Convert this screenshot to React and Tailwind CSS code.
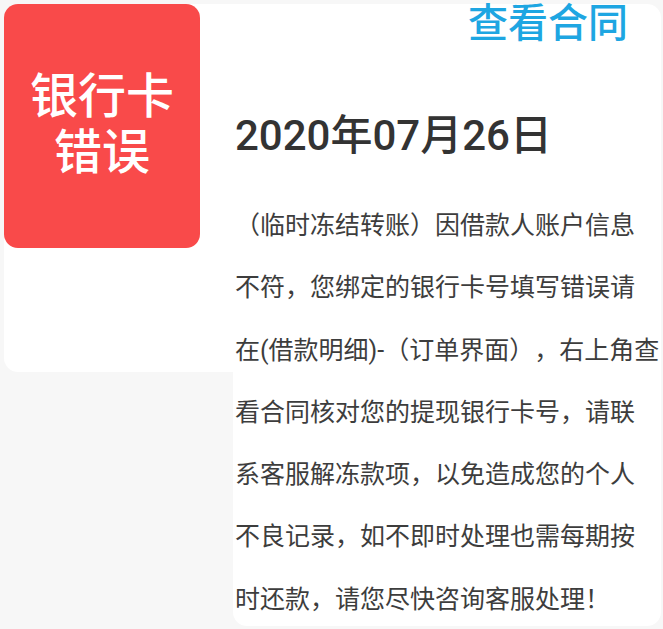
const LINES = [
  "（临时冻结转账）因借款人账户信息",
  "不符，您绑定的银行卡号填写错误请",
  "在(借款明细)-（订单界面），右上角查",
  "看合同核对您的提现银行卡号，请联",
  "系客服解冻款项，以免造成您的个人",
  "不良记录，如不即时处理也需每期按",
  "时还款，请您尽快咨询客服处理！",
];

export default function App() {
  const font = { fontFamily: 'Roboto, "Noto Sans CJK SC", sans-serif' };
  return (
    <div className="w-[663px] h-[629px] bg-[#f7f7f7] overflow-hidden" style={font}>
      <div className="flex pt-[4px] pl-[4px]">
        {/* left column */}
        <div className="w-[229px] h-[368px] bg-white rounded-l-[14px]">
          <div className="w-[196px] h-[244px] bg-[#f94a4a] rounded-[14px] flex flex-col items-center justify-center text-white text-[48px] leading-[56px] font-medium pb-[2px]">
            <span>银行卡</span>
            <span>错误</span>
          </div>
        </div>
        {/* right column */}
        <div className="w-[428px] h-[622px] bg-white rounded-r-[14px] rounded-bl-[14px]">
          <div className="flex justify-end pr-[33px] h-[40px]">
            <span className="text-[40px] leading-[40px] font-medium text-[#1ea6e2]">查看合同</span>
          </div>
          <div className="mt-[71px] pl-[2px] text-[42px] leading-[42px] font-medium text-[#333333]">
            2020年07月26日
          </div>
          <div className="mt-[38px] pl-[2px] text-[25px] leading-[62.3px] text-[#3d3d3d] [text-spacing-trim:space-all]">
            {LINES.map((l) => (
              <div key={l} className="whitespace-nowrap">
                {l}
              </div>
            ))}
          </div>
        </div>
      </div>
    </div>
  );
}
